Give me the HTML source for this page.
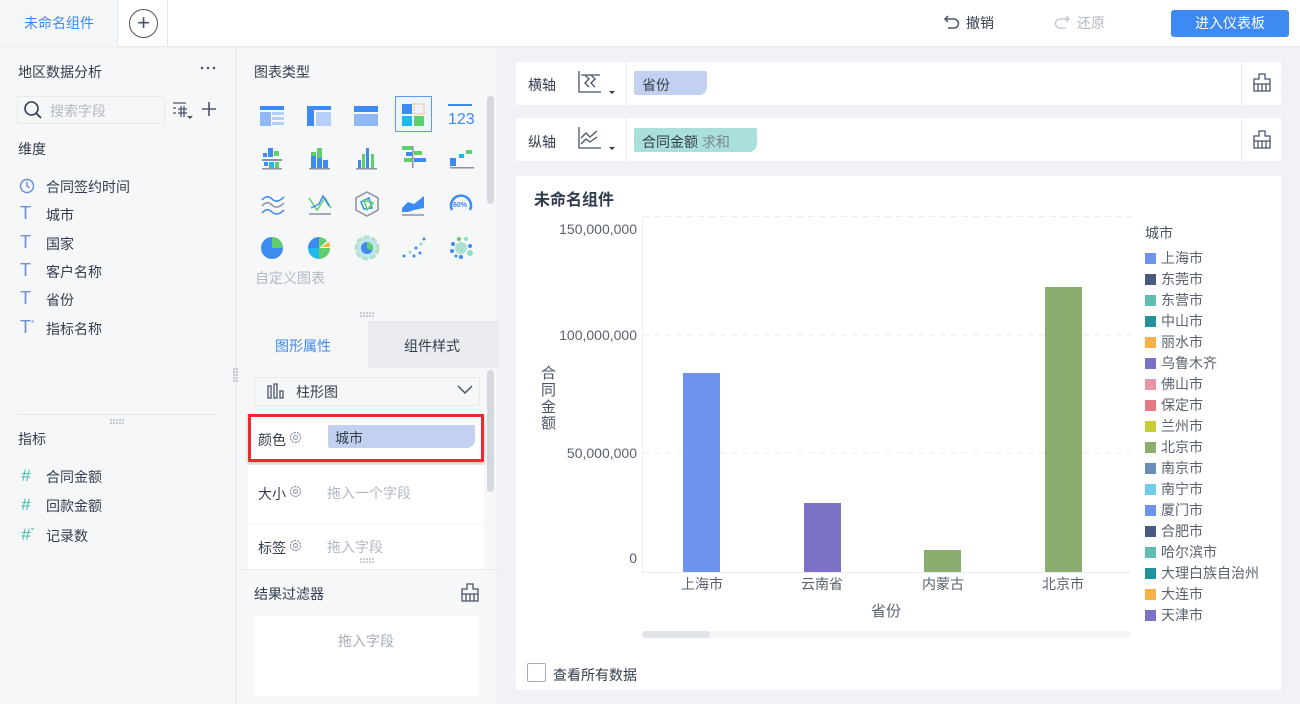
<!DOCTYPE html>
<html><head><meta charset="utf-8">
<style>
*{margin:0;padding:0;box-sizing:border-box}
body{width:1300px;height:704px;overflow:hidden;background:#f0f2f5;font-family:"Liberation Sans","Noto Sans CJK SC",sans-serif;font-size:14px;color:#333d4d;position:relative}
.a{position:absolute}
.t{white-space:nowrap}
</style></head><body>
<!-- top bar -->
<div class="a" style="left:0;top:0;width:1300px;height:47px;background:#fff;border-bottom:1px solid #e6e9ee"></div>
<div class="a" style="left:0;top:0;width:118px;height:47px;background:#f5f6f8;border-right:1px solid #e6e9ee"></div>
<div class="a t" style="left:24px;top:13px;color:#3d8af2;font-size:14px">未命名组件</div>
<div class="a" style="left:167px;top:0;width:1px;height:47px;background:#e6e9ee"></div>
<div class="a" style="left:129px;top:9px;width:29px;height:29px;border:1.5px solid #4a5466;border-radius:50%"></div>
<div class="a t" style="left:129px;top:8px;width:29px;text-align:center;font-size:22px;color:#4a5466;line-height:29px">+</div>
<svg class="a" style="left:943px;top:14px" width="18" height="16" viewBox="0 0 18 16"><path d="M5 2 L2 5 L5 8 M2 5 H11 A4.5 4.5 0 0 1 11 14 H5" fill="none" stroke="#4a5466" stroke-width="1.5"/></svg>
<div class="a t" style="left:966px;top:13px;color:#333d4d">撤销</div>
<svg class="a" style="left:1053px;top:14px" width="18" height="16" viewBox="0 0 18 16"><path d="M13 2 L16 5 L13 8 M16 5 H7 A4.5 4.5 0 0 0 7 14 H13" fill="none" stroke="#c5cad3" stroke-width="1.5"/></svg>
<div class="a t" style="left:1077px;top:13px;color:#b3b9c3">还原</div>
<div class="a" style="left:1171px;top:10px;width:118px;height:27px;background:#3d8af2;border-radius:3px;color:#fff;text-align:center;line-height:27px;font-size:14px">进入仪表板</div>

<!-- left panel -->
<div class="a" style="left:0;top:48px;width:236px;height:656px;background:#f6f7f9;border-right:1px solid #e6e9ee"></div>
<div class="a t" style="left:18px;top:62px">地区数据分析</div>
<svg class="a" style="left:200px;top:66px" width="16" height="4"><circle cx="2" cy="2" r="1.3" fill="#4a5466"/><circle cx="8" cy="2" r="1.3" fill="#4a5466"/><circle cx="14" cy="2" r="1.3" fill="#4a5466"/></svg>
<div class="a" style="left:17px;top:96px;width:148px;height:28px;border:1px solid #e6e9ee;background:#f6f7f9;border-radius:2px"></div>
<svg class="a" style="left:23px;top:100px" width="20" height="20"><circle cx="8.5" cy="8.5" r="6.5" fill="none" stroke="#333d4d" stroke-width="1.6"/><path d="M13 13 L18 18" stroke="#333d4d" stroke-width="1.8"/></svg>
<div class="a t" style="left:50px;top:101px;color:#b3b9c3">搜索字段</div>
<svg class="a" style="left:172px;top:100px" width="24" height="20"><path d="M1 3H14M1 8H4M1 13H4M6 9H15M6 13H15M9 6V17M12 6V17" stroke="#4a5466" stroke-width="1.3" fill="none"/><path d="M15 16H21L18 19Z" fill="#4a5466"/></svg>
<svg class="a" style="left:201px;top:101px" width="16" height="16"><path d="M8 1V15M1 8H15" stroke="#4a5466" stroke-width="1.6"/></svg>
<div class="a t" style="left:18px;top:139px">维度</div>
<svg class="a" style="left:19px;top:178px" width="16" height="16"><circle cx="8" cy="8" r="6.5" fill="none" stroke="#6e8fd6" stroke-width="1.5"/><path d="M8 4V8L10.5 10" stroke="#6e8fd6" stroke-width="1.5" fill="none"/></svg>
<div class="a t" style="left:46px;top:177px">合同签约时间</div>
<div class="a t" style="left:20px;top:203px;color:#6e8fd6;font-size:18px">T</div><div class="a t" style="left:46px;top:205px">城市</div>
<div class="a t" style="left:20px;top:232px;color:#6e8fd6;font-size:18px">T</div><div class="a t" style="left:46px;top:234px">国家</div>
<div class="a t" style="left:20px;top:260px;color:#6e8fd6;font-size:18px">T</div><div class="a t" style="left:46px;top:262px">客户名称</div>
<div class="a t" style="left:20px;top:288px;color:#6e8fd6;font-size:18px">T</div><div class="a t" style="left:46px;top:290px">省份</div>
<div class="a t" style="left:20px;top:317px;color:#6e8fd6;font-size:18px">T<sup style="font-size:8px">*</sup></div><div class="a t" style="left:46px;top:319px">指标名称</div>
<div class="a" style="left:18px;top:414px;width:199px;height:1px;background:#e3e6eb"></div>
<svg class="a" style="left:110px;top:419px" width="16" height="5"><g fill="#8a93a3"><circle cx="1" cy="1" r=".8"/><circle cx="4" cy="1" r=".8"/><circle cx="7" cy="1" r=".8"/><circle cx="10" cy="1" r=".8"/><circle cx="13" cy="1" r=".8"/><circle cx="1" cy="4" r=".8"/><circle cx="4" cy="4" r=".8"/><circle cx="7" cy="4" r=".8"/><circle cx="10" cy="4" r=".8"/><circle cx="13" cy="4" r=".8"/></g></svg>
<div class="a t" style="left:18px;top:429px">指标</div>
<div class="a t" style="left:21px;top:466px;color:#3fb8a8;font-size:17px;font-style:italic">#</div><div class="a t" style="left:46px;top:467px">合同金额</div>
<div class="a t" style="left:21px;top:495px;color:#3fb8a8;font-size:17px;font-style:italic">#</div><div class="a t" style="left:46px;top:496px">回款金额</div>
<div class="a t" style="left:21px;top:525px;color:#3fb8a8;font-size:17px;font-style:italic">#<sup style="font-size:8px">*</sup></div><div class="a t" style="left:46px;top:526px">记录数</div>

<!-- middle panel -->
<div class="a" style="left:237px;top:48px;width:261px;height:656px;background:#f6f7f9;border-right:1px solid #e6e9ee"></div>
<div class="a t" style="left:254px;top:62px">图表类型</div>
<div class="a" style="left:487px;top:96px;width:7px;height:108px;background:#d5d8de;border-radius:4px"></div>
<div class="a" style="left:395px;top:96px;width:37px;height:36px;border:1.5px solid #5b9af5;background:#eef4fe"></div>
<svg class="a" style="left:254px;top:96px" width="230" height="170">
 <g transform="translate(6,10)"><rect width="24" height="4" fill="#3d8af2"/><rect y="6" width="11" height="14" fill="#8fb8f5"/><rect x="12" y="6" width="12" height="3" fill="#b5d0f8"/><rect x="12" y="11" width="12" height="3" fill="#b5d0f8"/><rect x="12" y="16" width="12" height="3" fill="#b5d0f8"/></g>
 <g transform="translate(53,10)"><rect width="24" height="4" fill="#3d8af2"/><rect y="0" width="7" height="20" fill="#3d8af2"/><rect x="9" y="6" width="15" height="14" fill="#b5d0f8"/></g>
 <g transform="translate(100,10)"><rect width="24" height="6" fill="#3d8af2"/><rect y="8" width="24" height="12" fill="#8fb8f5"/></g>
 <g transform="translate(148,8)"><rect width="10" height="10" fill="#3d8af2"/><rect x="12" width="10" height="10" fill="none" stroke="#f7b53b" stroke-dasharray="2 1"/><rect y="12" width="10" height="10" fill="#20b9ef"/><rect x="12" y="12" width="10" height="10" fill="#5fcf6b"/></g>
 <g transform="translate(194,8)"><rect width="24" height="2" fill="#3d8af2"/><text x="0" y="20" font-size="16" fill="#3d8af2" font-family="Liberation Sans">123</text></g>
 <g transform="translate(8,52)"><rect x="6" width="5" height="9" fill="#3d8af2"/><rect x="12" y="3" width="5" height="5" fill="#5fcf6b"/><rect x="1" y="5" width="4" height="4" fill="#3d8af2"/><rect y="11" width="20" height="2" fill="#8a93a3"/><rect x="2" y="14" width="4" height="4" fill="#3d8af2"/><rect x="7" y="14" width="5" height="6" fill="#20b9ef"/><rect x="13" y="14" width="4" height="6" fill="#5fcf6b"/><rect y="20" width="20" height="1.5" fill="#8a93a3"/></g>
 <g transform="translate(55,52)"><rect x="2" y="8" width="5" height="12" fill="#3d8af2"/><rect x="2" y="4" width="5" height="4" fill="#5fcf6b"/><rect x="8" y="0" width="5" height="20" fill="#5fcf6b"/><rect x="8" y="10" width="5" height="10" fill="#3d8af2"/><rect x="14" y="12" width="5" height="8" fill="#3d8af2"/><rect y="20" width="21" height="1.5" fill="#8a93a3"/></g>
 <g transform="translate(102,52)"><rect x="2" y="12" width="3" height="8" fill="#3d8af2"/><rect x="6" y="6" width="3" height="14" fill="#5fcf6b"/><rect x="10" y="0" width="3" height="20" fill="#3d8af2"/><rect x="15" y="6" width="3" height="14" fill="#5fcf6b"/><rect y="20" width="21" height="1.5" fill="#8a93a3"/></g>
 <g transform="translate(148,50)"><rect x="0" y="0" width="10" height="4" fill="#5fcf6b"/><rect x="4" y="6" width="6" height="4" fill="#3d8af2"/><rect x="2" y="12" width="8" height="4" fill="#5fcf6b"/><rect x="12" y="5" width="8" height="4" fill="#5fcf6b"/><rect x="12" y="12" width="12" height="4" fill="#3d8af2"/><rect x="10" y="0" width="1.5" height="22" fill="#8a93a3"/></g>
 <g transform="translate(196,54)"><rect x="0" y="8" width="6" height="8" fill="#3d8af2"/><rect x="9" y="4" width="5" height="4" fill="#20b9ef"/><rect x="16" y="0" width="6" height="4" fill="#5fcf6b"/><rect y="17" width="24" height="1.5" fill="#8a93a3"/></g>
 <g transform="translate(8,98)" fill="none" stroke-width="1.5"><path d="M0 6 Q5 0 10 5 T22 3" stroke="#3d8af2"/><path d="M0 12 Q5 6 10 11 T22 9" stroke="#8a93a3"/><path d="M0 19 Q5 13 10 18 T22 16" stroke="#3d8af2"/></g>
 <g transform="translate(55,98)" fill="none" stroke-width="1.5"><path d="M0 4 L8 16 L16 4 L22 14" stroke="#5fcf6b"/><path d="M2 14 L10 10 L14 2 L20 12" stroke="#3d8af2"/><path d="M0 20H22" stroke="#8a93a3"/></g>
 <g transform="translate(101,96)" fill="none"><path d="M12 0 L23 6 L23 18 L12 24 L1 18 L1 6 Z" stroke="#8a93a3" stroke-width="1.5"/><path d="M6 10 L14 6 L17 16 L9 17 Z" stroke="#3d8af2" stroke-width="1.5"/><path d="M9 8 L18 11 L12 18 Z" stroke="#5fcf6b" stroke-width="1.5"/></g>
 <g transform="translate(148,98)"><path d="M0 14 L6 8 L12 10 L22 2 L22 14 L12 16 L6 18 L0 18 Z" fill="#3d8af2"/><path d="M0 21H22" stroke="#8a93a3" stroke-width="1.5"/></g>
 <g transform="translate(195,96)" fill="none"><path d="M3 18 A10 10 0 1 1 21 18" stroke="#3d8af2" stroke-width="2.5"/><text x="4" y="15" font-size="7" fill="#3d8af2" font-weight="bold" stroke="none" font-family="Liberation Sans">60%</text></g>
 <g transform="translate(18,152)"><circle r="11" fill="#3d8af2"/><path d="M0 0 L0 -11 A11 11 0 0 1 11 0 Z" fill="#5fcf6b"/></g>
 <g transform="translate(65,152)"><path d="M0 0 L0 -11 A11 11 0 0 0 -11 0 Z" fill="#3d8af2"/><path d="M0 0 L0 -11 A11 11 0 0 1 8 -7 Z" fill="#5fcf6b"/><path d="M0 0 L11 0 A11 11 0 0 1 0 11 Z" fill="#5fcf6b"/><path d="M2 -1 L10 -6 A11 11 0 0 1 11 -1 Z" fill="#f7b53b"/><path d="M0 0 L0 11 A11 11 0 0 1 -11 0 Z" fill="#20b9ef"/></g>
 <g transform="translate(113,152)"><circle r="11" fill="#bfe3f7"/><circle r="11" fill="none" stroke="#b8e0c0" stroke-width="3" stroke-dasharray="6 2"/><circle r="6" fill="#3d8af2"/><path d="M0 0 L0 -6 A6 6 0 0 1 5 3 Z" fill="#5fcf6b"/></g>
 <g transform="translate(148,140)" fill="#3d8af2"><circle cx="2" cy="20" r="1.5"/><circle cx="8" cy="16" r="1.5" fill="#8fdfc0"/><circle cx="14" cy="12" r="1.5"/><circle cx="19" cy="8" r="1.5" fill="#8fdfc0"/><circle cx="22" cy="3" r="1.5"/><circle cx="12" cy="20" r="1.5"/><circle cx="18" cy="17" r="1.5"/></g>
 <g transform="translate(207,152)"><circle r="6" fill="#a8e0d0"/><circle cx="-8" cy="-4" r="2" fill="#3d8af2"/><circle cx="-9" cy="3" r="2" fill="#3d8af2"/><circle cx="-2" cy="-9" r="2" fill="#5fcf6b"/><circle cx="5" cy="-9" r="2" fill="#8fdfc0"/><circle cx="9" cy="-2" r="2" fill="#3d8af2"/><circle cx="9" cy="5" r="3" fill="#8fdfc0"/><circle cx="0" cy="9" r="2" fill="#3d8af2"/><circle cx="-5" cy="8" r="1.5" fill="#3d8af2"/></g>
</svg>
<div class="a t" style="left:255px;top:268px;color:#b3b9c3">自定义图表</div>
<svg class="a" style="left:360px;top:312px" width="16" height="5"><g fill="#8a93a3"><circle cx="1" cy="1" r=".8"/><circle cx="4" cy="1" r=".8"/><circle cx="7" cy="1" r=".8"/><circle cx="10" cy="1" r=".8"/><circle cx="13" cy="1" r=".8"/><circle cx="1" cy="4" r=".8"/><circle cx="4" cy="4" r=".8"/><circle cx="7" cy="4" r=".8"/><circle cx="10" cy="4" r=".8"/><circle cx="13" cy="4" r=".8"/></g></svg>
<div class="a" style="left:237px;top:321px;width:131px;height:47px;background:#f6f7f9"></div>
<div class="a" style="left:368px;top:321px;width:129px;height:47px;background:#e9ebef"></div>
<div class="a t" style="left:275px;top:336px;color:#3d8af2">图形属性</div>
<div class="a t" style="left:404px;top:336px;color:#333d4d">组件样式</div>
<svg class="a" style="left:233px;top:368px" width="5" height="15"><g fill="#8a93a3"><circle cx="1" cy="1" r=".8"/><circle cx="1" cy="4" r=".8"/><circle cx="1" cy="7" r=".8"/><circle cx="1" cy="10" r=".8"/><circle cx="1" cy="13" r=".8"/><circle cx="4" cy="1" r=".8"/><circle cx="4" cy="4" r=".8"/><circle cx="4" cy="7" r=".8"/><circle cx="4" cy="10" r=".8"/><circle cx="4" cy="13" r=".8"/></g></svg>
<div class="a" style="left:487px;top:370px;width:7px;height:122px;background:#d5d8de;border-radius:4px"></div>
<div class="a" style="left:254px;top:377px;width:226px;height:29px;border:1px solid #e6e9ee;background:#f6f7f9;border-radius:2px"></div>
<svg class="a" style="left:266px;top:382px" width="20" height="18"><path d="M2 16V4H5V16ZM8 16V2H11V16ZM14 16V9H17V16Z" fill="none" stroke="#4a5466" stroke-width="1.3"/></svg>
<div class="a t" style="left:296px;top:382px">柱形图</div>
<svg class="a" style="left:457px;top:385px" width="16" height="10"><path d="M1 1 L8 8 L15 1" fill="none" stroke="#4a5466" stroke-width="1.5"/></svg>
<div class="a" style="left:248px;top:414px;width:236px;height:48px;background:#fff;border:3px solid #f0282d;box-shadow:0 2px 4px rgba(0,0,0,.2)"></div>
<div class="a t" style="left:258px;top:430px">颜色</div>
<svg class="a" style="left:289px;top:431px" width="13" height="13"><circle cx="6.5" cy="6.5" r="5" fill="none" stroke="#8a93a3" stroke-width="1.2" stroke-dasharray="2.2 0.9"/><circle cx="6.5" cy="6.5" r="2" fill="none" stroke="#8a93a3" stroke-width="1"/></svg>
<div class="a" style="left:328px;top:425px;width:147px;height:23px;background:#c2d1ef;border-radius:2px 2px 8px 2px"></div>
<div class="a t" style="left:335px;top:428px">城市</div>
<div class="a" style="left:248px;top:465px;width:236px;height:58px;background:#fff"></div>
<div class="a t" style="left:258px;top:484px">大小</div>
<svg class="a" style="left:289px;top:485px" width="13" height="13"><circle cx="6.5" cy="6.5" r="5" fill="none" stroke="#8a93a3" stroke-width="1.2" stroke-dasharray="2.2 0.9"/><circle cx="6.5" cy="6.5" r="2" fill="none" stroke="#8a93a3" stroke-width="1"/></svg>
<div class="a t" style="left:327px;top:483px;color:#b3b9c3">拖入一个字段</div>
<div class="a" style="left:248px;top:524px;width:236px;height:45px;background:#fff"></div>
<div class="a t" style="left:258px;top:538px">标签</div>
<svg class="a" style="left:289px;top:539px" width="13" height="13"><circle cx="6.5" cy="6.5" r="5" fill="none" stroke="#8a93a3" stroke-width="1.2" stroke-dasharray="2.2 0.9"/><circle cx="6.5" cy="6.5" r="2" fill="none" stroke="#8a93a3" stroke-width="1"/></svg>
<div class="a t" style="left:327px;top:537px;color:#b3b9c3">拖入字段</div>
<svg class="a" style="left:360px;top:558px" width="16" height="5"><g fill="#8a93a3"><circle cx="1" cy="1" r=".8"/><circle cx="4" cy="1" r=".8"/><circle cx="7" cy="1" r=".8"/><circle cx="10" cy="1" r=".8"/><circle cx="13" cy="1" r=".8"/><circle cx="1" cy="4" r=".8"/><circle cx="4" cy="4" r=".8"/><circle cx="7" cy="4" r=".8"/><circle cx="10" cy="4" r=".8"/><circle cx="13" cy="4" r=".8"/></g></svg>
<div class="a" style="left:237px;top:569px;width:261px;height:1px;background:#e6e9ee"></div>
<div class="a t" style="left:254px;top:584px">结果过滤器</div>
<svg class="a" style="left:460px;top:583px" width="20" height="19"><path d="M7 1H13V6H18V18H2V6H7Z M2 11H18 M6 11V18 M10 11V18 M14 11V18" fill="none" stroke="#4a5466" stroke-width="1.3"/></svg>
<div class="a" style="left:254px;top:616px;width:225px;height:80px;background:#fff"></div>
<div class="a t" style="left:338px;top:631px;color:#a7adb8">拖入字段</div>

<!-- axis rows -->
<div class="a" style="left:516px;top:62px;width:765px;height:43px;background:#fff"></div>
<div class="a" style="left:626px;top:62px;width:1px;height:43px;background:#e6e9ee"></div>
<div class="a" style="left:1241px;top:62px;width:1px;height:43px;background:#e6e9ee"></div>
<div class="a t" style="left:528px;top:75px">横轴</div>
<svg class="a" style="left:578px;top:70px" width="40" height="28"><path d="M1 1V22H23" fill="none" stroke="#4a5466" stroke-width="1.3"/><path d="M7 5 L11 9 L7 13 L11 17 M13 5 L17 9 L13 13 L17 17 M3 5H22" fill="none" stroke="#4a5466" stroke-width="1.3"/><path d="M31 21H37L34 24Z" fill="#333d4d"/></svg>
<div class="a" style="left:634px;top:71px;width:73px;height:24px;background:#c2d1ef;border-radius:2px 2px 8px 2px"></div>
<div class="a t" style="left:642px;top:75px">省份</div>
<svg class="a" style="left:1252px;top:73px" width="20" height="19"><path d="M7 1H13V6H18V18H2V6H7Z M2 11H18 M6 11V18 M10 11V18 M14 11V18" fill="none" stroke="#4a5466" stroke-width="1.3"/></svg>

<div class="a" style="left:516px;top:118px;width:765px;height:43px;background:#fff"></div>
<div class="a" style="left:626px;top:118px;width:1px;height:43px;background:#e6e9ee"></div>
<div class="a" style="left:1241px;top:118px;width:1px;height:43px;background:#e6e9ee"></div>
<div class="a t" style="left:528px;top:132px">纵轴</div>
<svg class="a" style="left:578px;top:126px" width="40" height="28"><path d="M1 1V22H23" fill="none" stroke="#4a5466" stroke-width="1.3"/><path d="M3 12 L8 7 L12 11 L19 5 M3 18 L8 13 L12 16 L19 11" fill="none" stroke="#4a5466" stroke-width="1.3"/><path d="M31 21H37L34 24Z" fill="#333d4d"/></svg>
<div class="a" style="left:634px;top:128px;width:123px;height:24px;background:#a9e0d9;border-radius:2px 2px 8px 2px"></div>
<div class="a t" style="left:642px;top:132px">合同金额 <span style="color:#7c8594">求和</span></div>
<svg class="a" style="left:1252px;top:130px" width="20" height="19"><path d="M7 1H13V6H18V18H2V6H7Z M2 11H18 M6 11V18 M10 11V18 M14 11V18" fill="none" stroke="#4a5466" stroke-width="1.3"/></svg>

<!-- chart card -->
<div class="a" style="left:516px;top:176px;width:765px;height:514px;background:#fff"></div>
<div class="a t" style="left:534px;top:186px;font-size:16px;font-weight:bold;color:#2f3a4c">未命名组件</div>
<svg class="a" style="left:516px;top:176px" width="765" height="514" font-family="Liberation Sans" font-size="14" fill="#5a6270">
 <g stroke="#e9ecf1" stroke-dasharray="6 5"><path d="M127 40.5H615M127 159H615M127 277H615"/></g>
 <path d="M126.5 40V396.5H615" stroke="#eceef2" fill="none"/>
 <text x="121" y="58" text-anchor="end">150,000,000</text>
 <text x="121" y="164" text-anchor="end">100,000,000</text>
 <text x="121" y="282" text-anchor="end">50,000,000</text>
 <text x="121" y="387" text-anchor="end">0</text>
 <rect x="167" y="197" width="37" height="199" fill="#6e93ee"/>
 <rect x="288" y="327" width="37" height="69" fill="#7b71c6"/>
 <rect x="408" y="374" width="37" height="22" fill="#8dac6f"/>
 <rect x="529" y="111" width="37" height="285" fill="#8dac6f"/>
 <text x="186" y="413" text-anchor="middle">上海市</text>
 <text x="306" y="413" text-anchor="middle">云南省</text>
 <text x="427" y="413" text-anchor="middle">内蒙古</text>
 <text x="547" y="413" text-anchor="middle">北京市</text>
 <text x="370" y="440" text-anchor="middle" font-size="15">省份</text>
 <text x="25" y="202" font-size="15" fill="#4a5466">合</text><text x="25" y="219" font-size="15" fill="#4a5466">同</text><text x="25" y="236" font-size="15" fill="#4a5466">金</text><text x="25" y="252" font-size="15" fill="#4a5466">额</text>
 <rect x="126" y="455" width="489" height="7" rx="3.5" fill="#f5f6f8"/>
 <rect x="126" y="455" width="68" height="7" rx="3.5" fill="#e1e4e9"/>
 <text x="629" y="62" fill="#4a5466">城市</text>
 <g font-size="14">
  <rect x="629" y="77" width="11" height="11" fill="#6e93ee"/><text x="645" y="87">上海市</text>
  <rect x="629" y="98" width="11" height="11" fill="#485a80"/><text x="645" y="108">东莞市</text>
  <rect x="629" y="119" width="11" height="11" fill="#62bdb3"/><text x="645" y="129">东营市</text>
  <rect x="629" y="140" width="11" height="11" fill="#23929c"/><text x="645" y="150">中山市</text>
  <rect x="629" y="161" width="11" height="11" fill="#f8b04b"/><text x="645" y="171">丽水市</text>
  <rect x="629" y="182" width="11" height="11" fill="#7b71c6"/><text x="645" y="192">乌鲁木齐</text>
  <rect x="629" y="203" width="11" height="11" fill="#e895a6"/><text x="645" y="213">佛山市</text>
  <rect x="629" y="224" width="11" height="11" fill="#e57986"/><text x="645" y="234">保定市</text>
  <rect x="629" y="245" width="11" height="11" fill="#c8cc36"/><text x="645" y="255">兰州市</text>
  <rect x="629" y="266" width="11" height="11" fill="#8dac6f"/><text x="645" y="276">北京市</text>
  <rect x="629" y="287" width="11" height="11" fill="#6a8db6"/><text x="645" y="297">南京市</text>
  <rect x="629" y="308" width="11" height="11" fill="#72cbe8"/><text x="645" y="318">南宁市</text>
  <rect x="629" y="329" width="11" height="11" fill="#6e93ee"/><text x="645" y="339">厦门市</text>
  <rect x="629" y="350" width="11" height="11" fill="#485a80"/><text x="645" y="360">合肥市</text>
  <rect x="629" y="371" width="11" height="11" fill="#62bdb3"/><text x="645" y="381">哈尔滨市</text>
  <rect x="629" y="392" width="11" height="11" fill="#23929c"/><text x="645" y="402">大理白族自治州</text>
  <rect x="629" y="413" width="11" height="11" fill="#f8b04b"/><text x="645" y="423">大连市</text>
  <rect x="629" y="434" width="11" height="11" fill="#7b71c6"/><text x="645" y="444">天津市</text>
 </g>
 <rect x="620" y="454" width="110" height="10" fill="#fff"/>
</svg>
<div class="a" style="left:527px;top:663px;width:19px;height:19px;border:1px solid #a7adb8;border-radius:2px;background:#fff"></div>
<div class="a t" style="left:553px;top:665px">查看所有数据</div>
</body></html>
